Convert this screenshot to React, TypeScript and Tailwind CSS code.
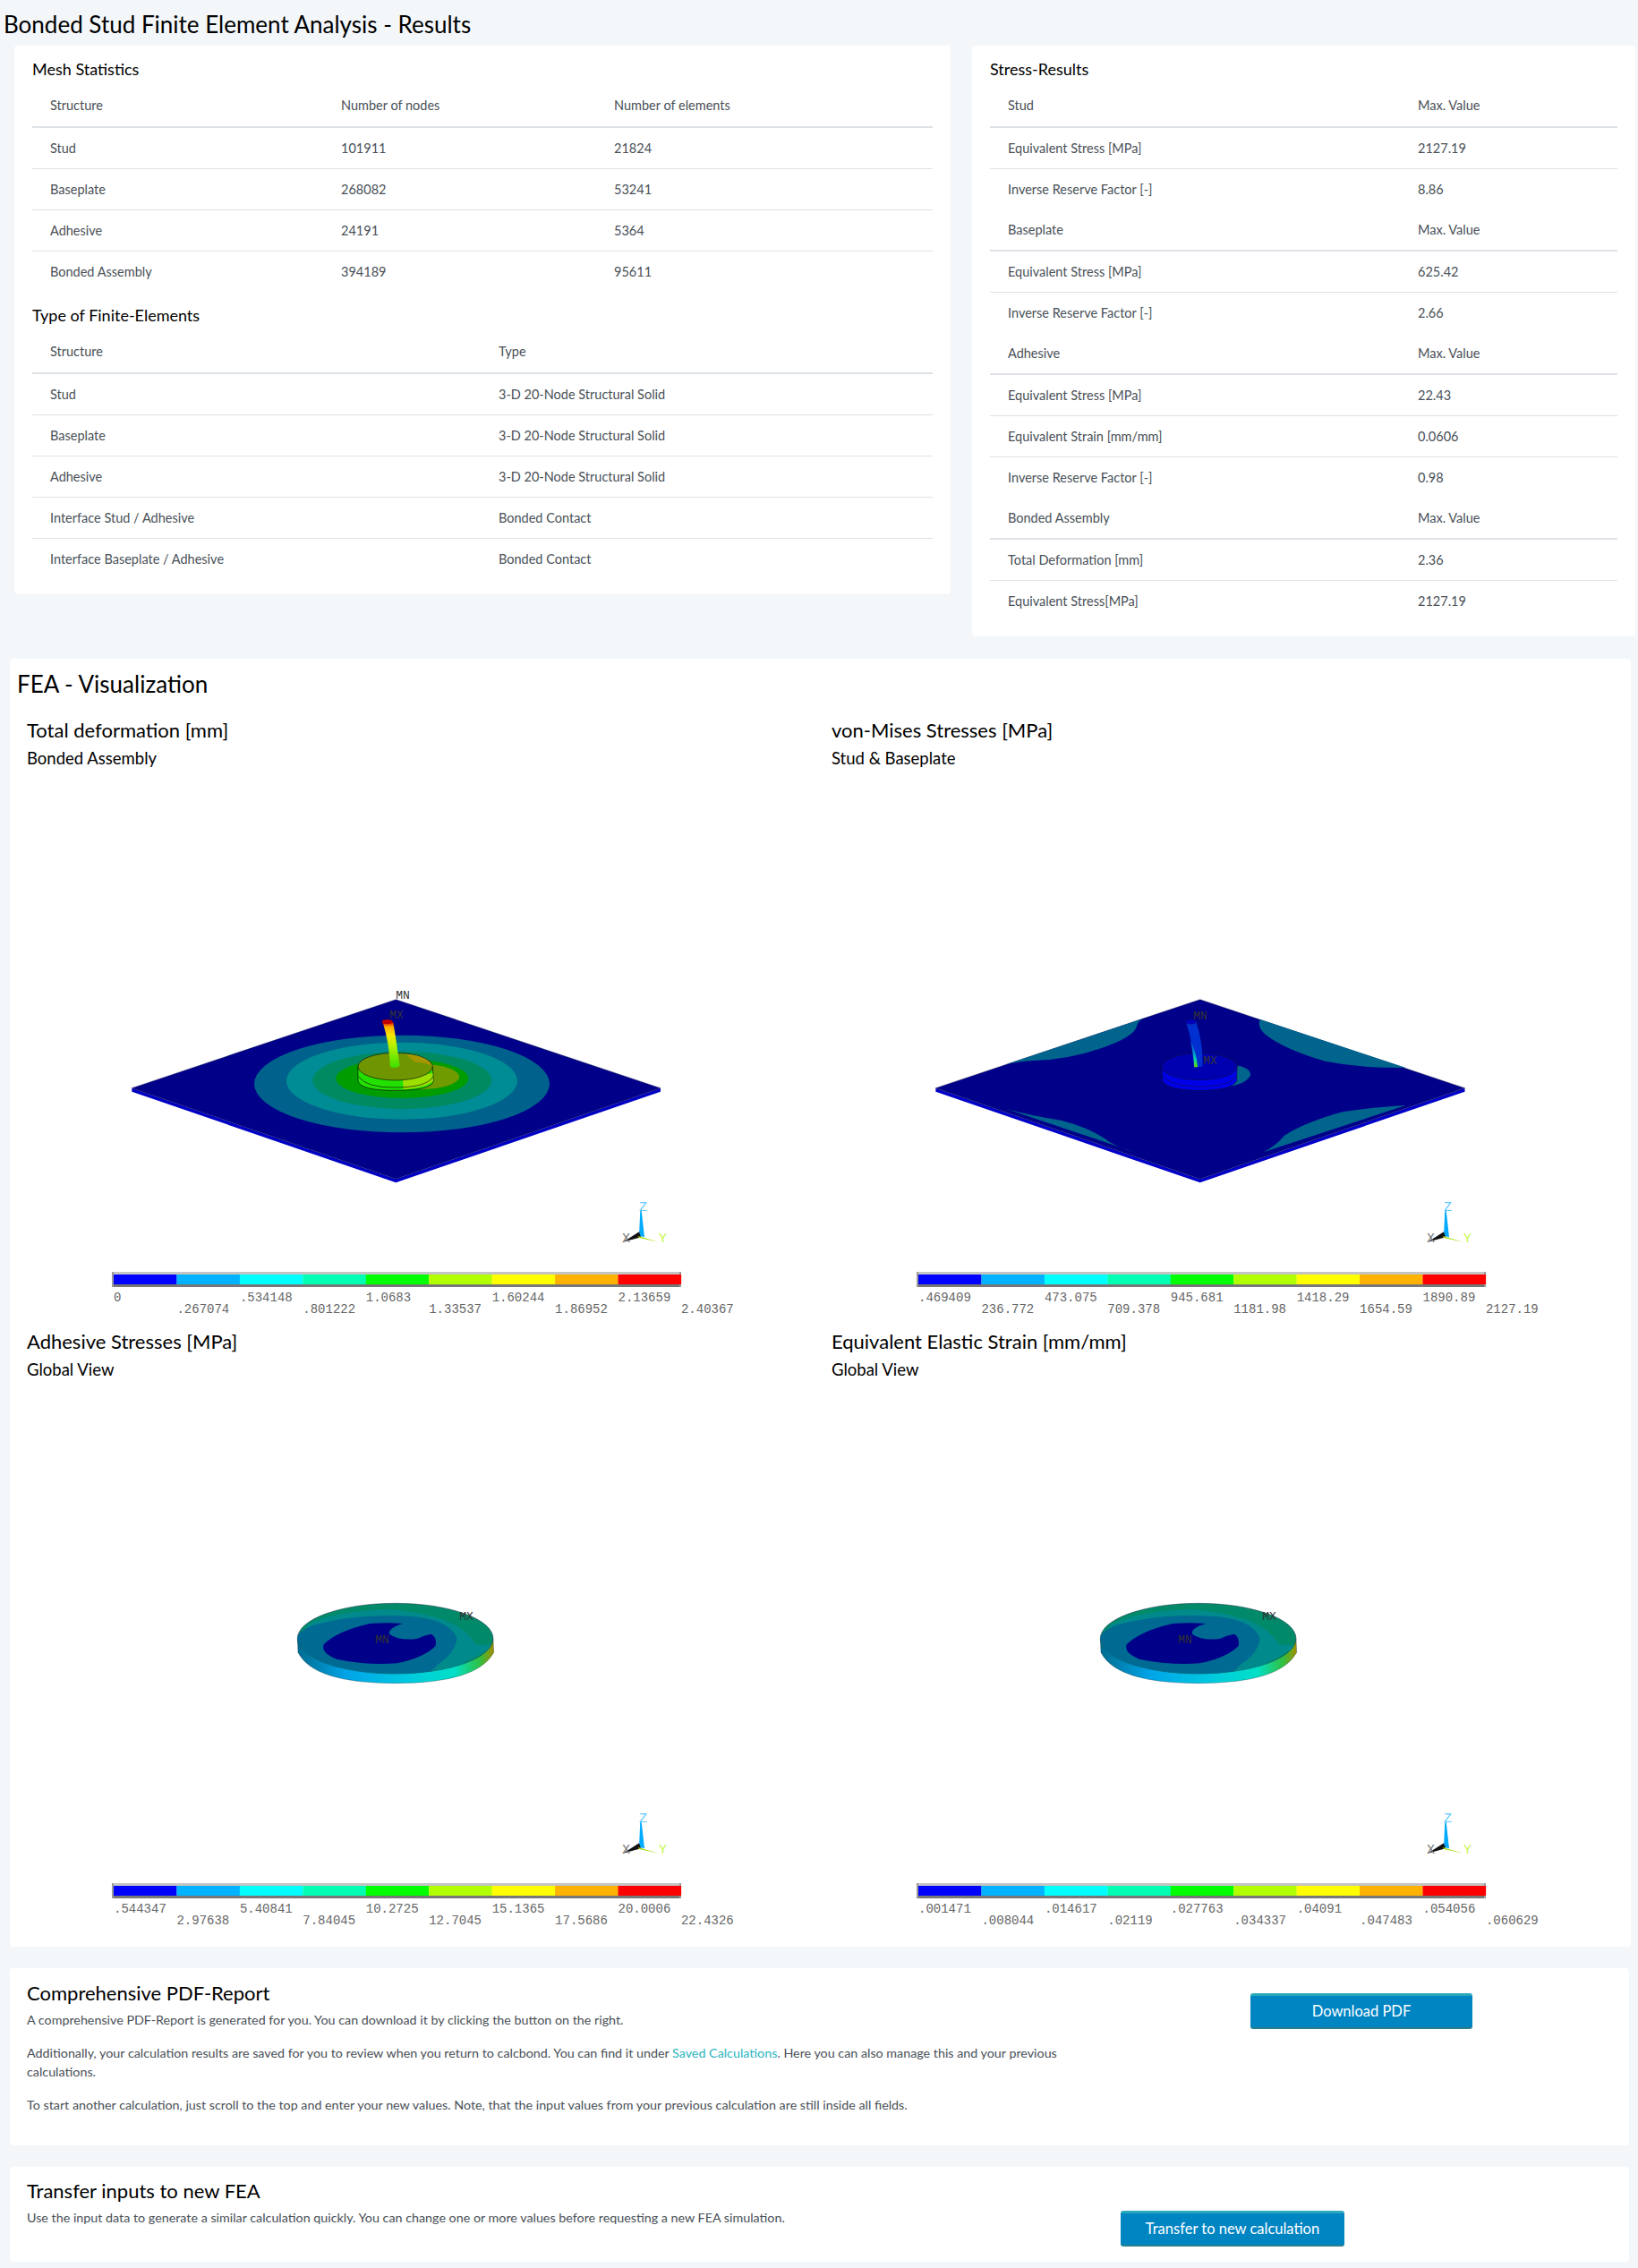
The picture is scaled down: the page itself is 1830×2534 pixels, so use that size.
import React from 'react';

const SCALE = ['#0000ff', '#00b2ff', '#00ffff', '#00ffb2', '#00ff00', '#b2ff00', '#ffff00', '#ffb200', '#ff0000'];

const PLOT_LABEL = 'font-[Liberation_Mono,monospace] text-[14px] fill-[#666666]';

// legend + axis triad are the same on every ANSYS plot
const Legend: React.FC<{ labels: string[] }> = ({ labels }) => (
  <g>
    <rect x="95" y="557" width="636" height="3" fill="#c4c4c4" />
    <rect x="95" y="571" width="636" height="3" fill="#777777" />
    <rect x="95" y="557" width="2" height="17" fill="#999999" />
    <rect x="729" y="557" width="2" height="17" fill="#999999" />
    {SCALE.map((c, i) => (
      <rect key={c} x={97 + i * 70.44} y="560" width="70.6" height="11" fill={c} />
    ))}
    {labels.map((l, i) => (
      <text key={l} x={97 + i * 70.44} y={i % 2 === 0 ? 590 : 603} className={PLOT_LABEL}>
        {l}
      </text>
    ))}
  </g>
);

const Triad = () => (
  <g>
    <g transform="translate(610 455) scale(0.3333)">
      <path d="M226 100 L230 100 L240 190 L222 185 Z" fill="#00aaff" />
      <path d="M168 206 L222 172 L228 190 Z" fill="#111111" />
      <path d="M218 186 L288 206 L222 192 Z" fill="#a0dc00" />
    </g>
    <text x="684" y="489" className="font-[Liberation_Mono,monospace] text-[15px] fill-[#5cc8ff]">Z</text>
    <text x="665" y="524" className="font-[Liberation_Mono,monospace] text-[15px] fill-[#777777]">X</text>
    <text x="706" y="524" className="font-[Liberation_Mono,monospace] text-[15px] fill-[#c8f850]">Y</text>
  </g>
);

const Marker: React.FC<{ x: number; y: number; t: string }> = ({ x, y, t }) => (
  <text x={x} y={y} textAnchor="middle" className="font-[Liberation_Mono,monospace] text-[13px] fill-[#333333]">
    {t}
  </text>
);

const DeformationPlate = () => (
  <>
    <g transform="translate(70 215) scale(0.3333)">
      <path d="M142 410 L142 422 L1027 727 L1914 422 L1914 410 L1027 715 Z" fill="#0000c4" />
      <path d="M142 410 L1027 113 L1914 410 L1027 715 Z" fill="#000088" stroke="#222244" strokeWidth="1" />
      <ellipse cx="1047" cy="396" rx="495" ry="163" fill="#00628c" />
      <ellipse cx="1047" cy="386" rx="387" ry="129" fill="#008c94" />
      <ellipse cx="1048" cy="384" rx="300" ry="96" fill="#008a62" />
      <ellipse cx="1048" cy="378" rx="222" ry="66" fill="#009c00" />
      <ellipse cx="1110" cy="372" rx="130" ry="42" fill="#6f9a00" />
      {/* disc */}
      <path d="M900 338 L900 385 Q905 418 1025 418 Q1150 418 1153 385 L1150 338 Z" fill="#22e000" stroke="#111111" strokeWidth="2" />
      <path d="M1050 380 L1150 360 L1152 386 Q1130 408 1052 414 Z" fill="#9ce000" />
      <path d="M902 372 Q930 410 1025 408 Q1130 408 1152 372" fill="none" stroke="#111111" strokeWidth="2" />
      <ellipse cx="1025" cy="338" rx="125" ry="46" fill="#6f9600" stroke="#111111" strokeWidth="2" />
      <path d="M1060 296 Q1130 300 1150 336 Q1130 325 1090 322 Z" fill="#a89600" />
      {/* stud */}
      <defs>
        <linearGradient id="stud-a" x1="0" y1="0" x2="0" y2="1">
          <stop offset="0" stopColor="#e01000" />
          <stop offset="0.1" stopColor="#ffae00" />
          <stop offset="0.28" stopColor="#f6e800" />
          <stop offset="0.5" stopColor="#b8f000" />
          <stop offset="1" stopColor="#38e000" />
        </linearGradient>
      </defs>
      <path d="M983 190 Q1005 260 1008 338 Q1025 348 1040 335 Q1030 260 1018 190 Z" fill="url(#stud-a)" />
      <ellipse cx="998" cy="188" rx="18" ry="8" fill="#c00000" />
    </g>
    <Marker x={420} y={252} t="MN" />
    <Marker x={413} y={274} t="MX" />
  </>
);

const StressPlate = () => (
  <>
    <g transform="translate(111 215) scale(0.3831 0.3333)">
      <path d="M14 410 L14 422 L785 727 L1557 422 L1557 410 L785 715 Z" fill="#0000c8" />
      <path d="M14 410 L785 113 L1557 410 L785 715 Z" fill="#000088" stroke="#222244" strokeWidth="1" />
      <path d="M215 332 L625 175 Q605 180 600 205 Q590 240 500 275 Q400 315 300 318 Q250 322 215 332 Z" fill="#00648c" />
      <path d="M960 180 Q950 205 975 230 Q1030 280 1150 320 Q1260 345 1385 342 Z" fill="#00648c" />
      <path d="M220 480 Q300 505 380 518 Q470 545 520 590 Q550 610 595 625 Z" fill="#00648c" />
      <path d="M1385 468 Q1280 475 1200 490 Q1090 525 1030 570 Q1010 600 970 625 Z" fill="#00648c" />
      <path d="M860 330 Q935 335 932 368 Q915 400 860 405 Z" fill="#00648c" />
      <path d="M673 338 L675 385 Q690 418 783 418 Q880 418 892 385 L893 338 Z" fill="#0000e8" stroke="#111133" strokeWidth="1.5" />
      <path d="M675 368 Q700 405 783 405 Q870 405 892 368" fill="none" stroke="#111133" strokeWidth="1.5" />
      <ellipse cx="783" cy="338" rx="110" ry="45" fill="#0000b0" stroke="#111133" strokeWidth="1.5" />
      <defs>
        <linearGradient id="stud-b" x1="0" y1="0" x2="0" y2="1">
          <stop offset="0" stopColor="#0044d8" />
          <stop offset="0.4" stopColor="#0080d0" />
          <stop offset="0.7" stopColor="#00d0b0" />
          <stop offset="1" stopColor="#60e000" />
        </linearGradient>
      </defs>
      <path d="M744 190 Q765 260 768 340 L792 338 Q795 260 773 185 Z" fill="#0030d0" />
      <path d="M756 250 Q775 290 778 340 L768 340 Q765 290 756 250 Z" fill="url(#stud-b)" />
      <ellipse cx="758" cy="188" rx="15" ry="8" fill="#0000c0" stroke="#111133" strokeWidth="1" />
    </g>
    <Marker x={412} y={275} t="MN" />
    <Marker x={423} y={325} t="MX" />
  </>
);

const AdhesiveDisc: React.FC<{ id: string; dx: number }> = ({ id, dx }) => (
  <>
    <g transform={`translate(${270 + dx} 212) scale(0.3333)`}>
      <defs>
        <clipPath id={id}>
          <ellipse cx="425" cy="215" rx="328" ry="118" />
        </clipPath>
        <linearGradient id={`${id}-side`} x1="0" y1="0" x2="1" y2="0">
          <stop offset="0" stopColor="#006c90" />
          <stop offset="0.25" stopColor="#00a4e8" />
          <stop offset="0.55" stopColor="#00c8e0" />
          <stop offset="0.8" stopColor="#00e0c8" />
          <stop offset="0.93" stopColor="#30c040" />
          <stop offset="1" stopColor="#a09000" />
        </linearGradient>
      </defs>
      <path d="M97 215 L99 262 Q150 365 425 365 Q700 365 755 262 L753 215 Z" fill={`url(#${id}-side)`} stroke="#113344" strokeWidth="1" />
      <ellipse cx="425" cy="215" rx="328" ry="118" fill="#008a6a" stroke="#223344" strokeWidth="1.5" />
      <g clipPath={`url(#${id})`}>
        <path d="M130 172 Q200 125 400 118 Q640 135 695 235 L760 240 L600 330 L300 345 L90 300 Z" fill="#008a8c" />
        <path d="M90 215 Q100 190 150 170 Q300 130 470 140 Q610 150 632 215 Q625 265 570 300 L530 340 L300 345 L80 300 Z" fill="#006a92" />
        <path d="M450 165 Q400 160 340 165 Q230 190 185 235 Q175 265 230 285 Q330 305 430 298 Q520 280 560 240 Q565 210 545 200 Q520 205 500 215 Q440 225 405 200 Q400 180 450 165 Z" fill="#000088" />
      </g>
    </g>
    <Marker x={397 + dx} y={289} t="MN" />
    <Marker x={491 + dx} y={263} t="MX" />
  </>
);

const FeaPlot: React.FC<{ title: string; sub: string; labels: string[]; children: React.ReactNode }> = ({ title, sub, labels, children }) => (
  <div className="h-[683px]">
    <h3 className="text-[22px] leading-[30px] text-black">{title}</h3>
    <h4 className="mt-1 text-[18.5px] leading-6 text-black">{sub}</h4>
    <svg viewBox="0 0 868 620" className="mt-[5px] block h-[620px] w-[868px]">
      {children}
      <Triad />
      <Legend labels={labels} />
    </svg>
  </div>
);

const Th: React.FC<{ children: React.ReactNode; tight?: boolean }> = ({ children, tight }) => (
  <th className={tight ? 'border-b-2 border-[#dee2e6] px-5 py-3 text-left text-[14.5px] leading-[21px] font-normal text-[#495057]' : 'border-b-2 border-[#dee2e6] px-5 pt-3 pb-[13px] text-left text-[14.5px] leading-[21px] font-normal text-[#495057]'}>{children}</th>
);

const Td: React.FC<{ children: React.ReactNode; last?: boolean }> = ({ children, last }) => (
  <td className={last ? 'px-5 py-3 text-[14.5px] leading-[21px] text-[#495057]' : 'border-b border-[#dee2e6] px-5 py-3 text-[14.5px] leading-[21px] text-[#495057]'}>{children}</td>
);

const MESH = [
  ['Stud', '101911', '21824'],
  ['Baseplate', '268082', '53241'],
  ['Adhesive', '24191', '5364'],
  ['Bonded Assembly', '394189', '95611'],
];

const ELEMENTS = [
  ['Stud', '3-D 20-Node Structural Solid'],
  ['Baseplate', '3-D 20-Node Structural Solid'],
  ['Adhesive', '3-D 20-Node Structural Solid'],
  ['Interface Stud / Adhesive', 'Bonded Contact'],
  ['Interface Baseplate / Adhesive', 'Bonded Contact'],
];

const STRESS: { name: string; rows: string[][] }[] = [
  { name: 'Stud', rows: [['Equivalent Stress [MPa]', '2127.19'], ['Inverse Reserve Factor [-]', '8.86']] },
  { name: 'Baseplate', rows: [['Equivalent Stress [MPa]', '625.42'], ['Inverse Reserve Factor [-]', '2.66']] },
  { name: 'Adhesive', rows: [['Equivalent Stress [MPa]', '22.43'], ['Equivalent Strain [mm/mm]', '0.0606'], ['Inverse Reserve Factor [-]', '0.98']] },
  { name: 'Bonded Assembly', rows: [['Total Deformation [mm]', '2.36'], ['Equivalent Stress[MPa]', '2127.19']] },
];

const App: React.FC = () => {
  return (
    <div className="min-h-[2534px] bg-[#f4f7fa] pb-2 font-[Lato,sans-serif] text-[#495057]">
      <h1 className="h-[51px] pt-[9px] pl-1 text-[26px] leading-9 text-black">Bonded Stud Finite Element Analysis - Results</h1>

      <div className="flex items-start gap-[24px] pl-4">
        {/* mesh tables */}
        <div className="w-[1046px] rounded bg-white px-5 pt-[14px] pb-[17px] shadow-[0_1px_2px_rgba(0,0,0,0.02)]">
          <h5 className="mb-[6px] text-[18px] leading-6 text-black">Mesh Statistics</h5>
          <table className="w-full table-fixed border-collapse">
            <colgroup>
              <col className="w-[325px]" />
              <col className="w-[305px]" />
              <col />
            </colgroup>
            <thead>
              <tr>
                <Th>Structure</Th>
                <Th>Number of nodes</Th>
                <Th>Number of elements</Th>
              </tr>
            </thead>
            <tbody>
              {MESH.map((r, i) => (
                <tr key={r[0]}>
                  {r.map((c) => (
                    <Td key={c} last={i === MESH.length - 1}>{c}</Td>
                  ))}
                </tr>
              ))}
            </tbody>
          </table>

          <h5 className="mt-[14px] mb-[6px] text-[18px] leading-6 text-black">Type of Finite-Elements</h5>
          <table className="w-full table-fixed border-collapse">
            <colgroup>
              <col className="w-[501px]" />
              <col />
            </colgroup>
            <thead>
              <tr>
                <Th>Structure</Th>
                <Th>Type</Th>
              </tr>
            </thead>
            <tbody>
              {ELEMENTS.map((r, i) => (
                <tr key={r[0]}>
                  <Td last={i === ELEMENTS.length - 1}>{r[0]}</Td>
                  <Td last={i === ELEMENTS.length - 1}>{r[1]}</Td>
                </tr>
              ))}
            </tbody>
          </table>
        </div>

        {/* stress results */}
        <div className="w-[741px] rounded bg-white px-5 pt-[14px] pb-[17px] shadow-[0_1px_2px_rgba(0,0,0,0.02)]">
          <h5 className="mb-[6px] text-[18px] leading-6 text-black">Stress-Results</h5>
          <table className="w-full table-fixed border-collapse">
            <colgroup>
              <col className="w-[458px]" />
              <col />
            </colgroup>
            {STRESS.map((group, g) => (
              <tbody key={group.name}>
                <tr>
                  <Th tight={g > 0}>{group.name}</Th>
                  <Th tight={g > 0}>Max. Value</Th>
                </tr>
                {group.rows.map((r, i) => (
                  <tr key={r[0]}>
                    <Td last={i === group.rows.length - 1}>{r[0]}</Td>
                    <Td last={i === group.rows.length - 1}>{r[1]}</Td>
                  </tr>
                ))}
              </tbody>
            ))}
          </table>
        </div>
      </div>

      {/* visualization */}
      <div className="mt-[25px] ml-[11px] h-[1439px] w-[1811px] rounded bg-white px-2 pt-[10px]">
        <h2 className="text-[26px] leading-9 text-black">FEA - Visualization</h2>
        <div className="mt-[19px] ml-[11px] grid grid-cols-[899px_899px]">
          <FeaPlot
            title="Total deformation [mm]"
            sub="Bonded Assembly"
            labels={['0', '.267074', '.534148', '.801222', '1.0683', '1.33537', '1.60244', '1.86952', '2.13659', '2.40367']}
          >
            <DeformationPlate />
          </FeaPlot>
          <FeaPlot
            title="von-Mises Stresses [MPa]"
            sub="Stud & Baseplate"
            labels={['.469409', '236.772', '473.075', '709.378', '945.681', '1181.98', '1418.29', '1654.59', '1890.89', '2127.19']}
          >
            <StressPlate />
          </FeaPlot>
          <FeaPlot
            title="Adhesive Stresses [MPa]"
            sub="Global View"
            labels={['.544347', '2.97638', '5.40841', '7.84045', '10.2725', '12.7045', '15.1365', '17.5686', '20.0006', '22.4326']}
          >
            <AdhesiveDisc id="disc-a" dx={0} />
          </FeaPlot>
          <FeaPlot
            title="Equivalent Elastic Strain [mm/mm]"
            sub="Global View"
            labels={['.001471', '.008044', '.014617', '.02119', '.027763', '.034337', '.04091', '.047483', '.054056', '.060629']}
          >
            <AdhesiveDisc id="disc-b" dx={-2} />
          </FeaPlot>
        </div>
      </div>

      {/* report */}
      <div className="mt-6 ml-[11px] flex h-[198px] w-[1809px] rounded bg-white pt-[13px] pl-[19px]">
        <div className="w-[1200px] text-[14.3px] leading-[21px] text-[#495057]">
          <h3 className="mb-[4px] text-[22px] leading-[30px] text-black">Comprehensive PDF-Report</h3>
          <p className="mb-4">A comprehensive PDF-Report is generated for you. You can download it by clicking the button on the right.</p>
          <p className="mb-4">
            Additionally, your calculation results are saved for you to review when you return to calcbond. You can find it under{' '}
            <a className="text-[#2bb5c0]">Saved Calculations</a>. Here you can also manage this and your previous calculations.
          </p>
          <p>To start another calculation, just scroll to the top and enter your new values. Note, that the input values from your previous calculation are still inside all fields.</p>
        </div>
        <button className="mt-[15px] ml-[167px] h-10 w-[248px] rounded-[3px] border-t-[3px] border-b-[2px] border-t-[#2aa9bd] border-b-[#2a7f8c] bg-[#0085c3] text-[16.5px] text-white">
          Download PDF
        </button>
      </div>

      {/* transfer */}
      <div className="mt-6 ml-[11px] flex h-[106px] w-[1809px] rounded bg-white pt-[12px] pl-[19px]">
        <div className="w-[1200px] text-[14.3px] leading-[21px] text-[#495057]">
          <h3 className="mb-[4px] text-[22px] leading-[30px] text-black">Transfer inputs to new FEA</h3>
          <p>Use the input data to generate a similar calculation quickly. You can change one or more values before requesting a new FEA simulation.</p>
        </div>
        <button className="mt-[37px] ml-[22px] h-10 w-[250px] rounded-[3px] border-t-[3px] border-b-[2px] border-t-[#2aa9bd] border-b-[#2a7f8c] bg-[#0085c3] text-[16.5px] text-white">
          Transfer to new calculation
        </button>
      </div>
    </div>
  );
};

export default App;
